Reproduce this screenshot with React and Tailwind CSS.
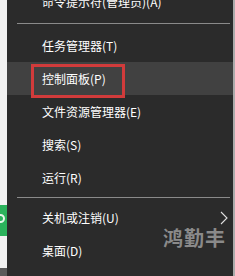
const font = { fontFamily: '"Noto Sans CJK SC", "Noto Sans", sans-serif' }

function Chevron() {
  return (
    <svg width="8" height="14" viewBox="0 0 8 14" className="text-[#e0e0e0]">
      <polyline points="1,1 7,7 1,13" fill="none" stroke="currentColor" strokeWidth="1.1" />
    </svg>
  )
}

function Item({ label, active, arrow }) {
  return (
    <div
      className={`relative h-[33px] flex items-center justify-between pl-[35px] pr-[5px] text-[12px] text-white ${
        active ? 'bg-[#414141]' : ''
      }`}
    >
      <span className="leading-none">{label}</span>
      {arrow && <Chevron />}
      {active && (
        <div className="absolute left-[24px] top-[2px] w-[94px] h-[34px] border-[3px] border-[#d13b3b] pointer-events-none" />
      )}
    </div>
  )
}

function Separator({ pad }) {
  return (
    <div className={pad}>
      <div className="ml-[10px] mr-[3px] h-px bg-[#8a8a8a]" />
    </div>
  )
}

export default function App() {
  return (
    <div className="relative w-[235px] h-[276px] flex overflow-hidden" style={font}>
      <div className="w-[7px] bg-[#f2f2f2] flex flex-col">
        <div className="h-[205px]" />
        <div className="h-[31px] bg-[#2bb35c] relative overflow-hidden">
          <div className="absolute -left-[4px] top-[9px] w-[9px] h-[9px] rounded-full border-2 border-[#e8f7ec]" />
        </div>
        <div className="flex-1" />
        <div className="h-[8px] bg-[#5a5a5a]" />
      </div>
      <div className="flex-1 bg-[#2b2b2b] flex flex-col">
        <div className="-mt-[14px] h-[32px] flex items-center pl-[35px] text-[12px] text-white">
          <span className="leading-none">命令提示符(管理员)(A)</span>
        </div>
        <Separator pad="pt-[5px] pb-[5px]" />
        <Item label="任务管理器(T)" />
        <Item label="控制面板(P)" active />
        <Item label="文件资源管理器(E)" />
        <Item label="搜索(S)" />
        <Item label="运行(R)" />
        <Separator pad="pt-[3px] pb-[3px]" />
        <Item label="关机或注销(U)" arrow />
        <Item label="桌面(D)" />
      </div>
      <div className="w-[2px] bg-[#ababab]" />
      <div className="absolute left-[163px] top-[228px] text-[20px] font-bold leading-none text-[#8a8a8a] tracking-[1px]">
        鸿勤丰
      </div>
    </div>
  )
}
